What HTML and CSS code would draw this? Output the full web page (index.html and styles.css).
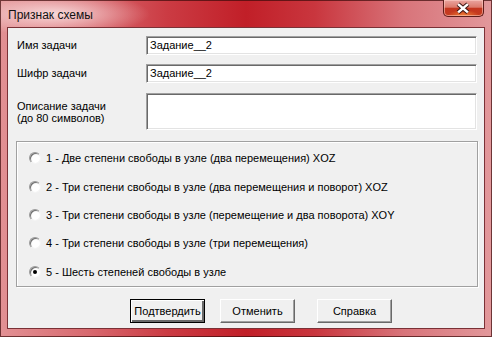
FILE: index.html
```html
<!DOCTYPE html>
<html lang="ru">
<head>
    <meta charset="UTF-8">
    <meta name="viewport" content="width=device-width, initial-scale=1.0">
    <link rel="stylesheet" href="styles.css">
</head>
<body>
    <div class="window">
        <div class="titlebar">
            <span class="title">Признак схемы</span>
            <div class="close">
                <svg width="41" height="17" viewBox="0 0 41 17">
                    <path d="M15.5 4 L25.5 12.5 M25.5 4 L15.5 12.5" stroke="#3b1512" stroke-width="4.6" fill="none"/>
                    <path d="M15.5 4 L25.5 12.5 M25.5 4 L15.5 12.5" stroke="#ffffff" stroke-width="2.6" fill="none"/>
                </svg>
            </div>
        </div>

        <div class="client">
            <div class="fields">
                <div class="field-label">Имя задачи</div>
                <div class="edit">Задание__2</div>

                <div class="field-label">Шифр задачи</div>
                <div class="edit">Задание__2</div>

                <div class="field-label multi">Описание задачи<br>(до 80 символов)</div>
                <div class="edit tall"></div>
            </div>

            <div class="group">
                <div class="option"><span class="radio"></span><span>1 - Две степени свободы в узле (два перемещения) XOZ</span></div>
                <div class="option"><span class="radio"></span><span>2 - Три степени свободы в узле (два перемещения и поворот) XOZ</span></div>
                <div class="option"><span class="radio"></span><span>3 - Три степени свободы в узле (перемещение и два поворота) XOY</span></div>
                <div class="option"><span class="radio"></span><span>4 - Три степени свободы в узле (три перемещения)</span></div>
                <div class="option"><span class="radio checked"></span><span>5 - Шесть степеней свободы в узле</span></div>
            </div>

            <div class="buttons">
                <div class="btn default">Подтвердить</div>
                <div class="btn">Отменить</div>
                <div class="btn help">Справка</div>
            </div>
        </div>
    </div>
</body>
</html>
```

FILE: styles.css
```css
html, body {
    margin: 0;
    height: 100%;
    background: #2a8fb0;
}

.window {
    width: 492px;
    height: 337px;
    box-sizing: border-box;
    display: flex;
    flex-direction: column;
    font-family: "Liberation Sans", Arial, sans-serif;
    font-size: 11px;
    color: #000;
    background:
        radial-gradient(ellipse 95px 22px at 55px 14px, rgba(255, 240, 240, 0.8), rgba(255, 240, 240, 0) 100%),
        linear-gradient(90deg, #e29194 0%, #d8696f 18%, #cb3b43 34%, #c11f28 50%, #c9363e 64%, #d8747a 82%, #e2989b 100%);
    box-shadow: inset 0 0 0 1px rgba(60, 10, 10, 0.7);
}

.titlebar {
    height: 27px;
    display: flex;
    justify-content: space-between;
    padding: 0 8px;
}

.title {
    font-size: 12px;
    line-height: 30px;
    color: #111;
}

.close {
    width: 41px;
    height: 17px;
    box-sizing: border-box;
    border: 1px solid #5c1d1b;
    border-top: none;
    border-radius: 0 0 5px 5px;
    background:
        radial-gradient(ellipse 16px 6px at 50% 100%, rgba(255, 150, 60, 0.8), rgba(255, 150, 60, 0)),
        linear-gradient(#eaa5a0 0%, #dc7a6c 45%, #c4361f 52%, #c53c20 100%);
    box-shadow: inset 0 0 0 1px rgba(255, 210, 200, 0.55);
    display: flex;
    justify-content: center;
}

.close svg {
    margin-left: -1px;
}

.client {
    height: 302px;
    margin: 0 7px;
    box-sizing: border-box;
    border: 1px solid #7a3136;
    background: #f0f0f0;
    padding-top: 8px;
    display: flex;
    flex-direction: column;
}

.fields {
    display: grid;
    grid-template-columns: 129px 331px;
    row-gap: 9px;
    margin-left: 9px;
}

.field-label {
    line-height: 19px;
}

.field-label.multi {
    line-height: 12px;
    padding-top: 7px;
    margin-top: 1px;
}

.edit {
    height: 19px;
    box-sizing: border-box;
    background: #fff;
    border: 1px solid;
    border-color: #a0a0a0 #ffffff #ffffff #a0a0a0;
    box-shadow: inset 1px 1px #696969, inset -1px -1px #e3e3e3;
    padding-left: 3px;
    line-height: 17px;
}

.edit.tall {
    height: 37px;
    margin-top: 1px;
}

.group {
    margin: 11px 0 0 8px;
    width: 462px;
    height: 146px;
    box-sizing: border-box;
    border: 1px solid #a0a0a0;
    box-shadow: inset 1px 1px #fff, 1px 1px #fff;
    padding: 2px 0 0 12px;
    display: flex;
    flex-direction: column;
}

.option {
    height: 28.5px;
    display: flex;
    align-items: center;
    gap: 5px;
}

.radio {
    width: 12px;
    height: 12px;
    box-sizing: border-box;
    border-radius: 50%;
    border: 1px solid;
    border-color: #9a9a9a #f4f4f4 #f4f4f4 #9a9a9a;
    background: radial-gradient(circle at 60% 60%, #ffffff 40%, #e4e4e4 100%);
    box-shadow: inset 1px 1px #707070;
    position: relative;
}

.radio.checked::after {
    content: "";
    position: absolute;
    left: 3px;
    top: 3px;
    width: 4px;
    height: 4px;
    border-radius: 50%;
    background: #000;
}

.buttons {
    margin: 12px 0 0 122px;
    display: flex;
    gap: 15px;
}

.btn {
    width: 75px;
    height: 24px;
    box-sizing: border-box;
    border: 1px solid;
    border-color: #ffffff #696969 #696969 #ffffff;
    box-shadow: inset -1px -1px #a0a0a0;
    background: #f0f0f0;
    display: flex;
    align-items: center;
    justify-content: center;
}

.btn.help {
    margin-left: 7px;
}

.btn.default {
    border: 1px solid #000;
    box-shadow: inset 1px 1px #fff, inset -2px -2px #696969, inset -1px -1px #a0a0a0;
    padding-bottom: 1px;
}
```
